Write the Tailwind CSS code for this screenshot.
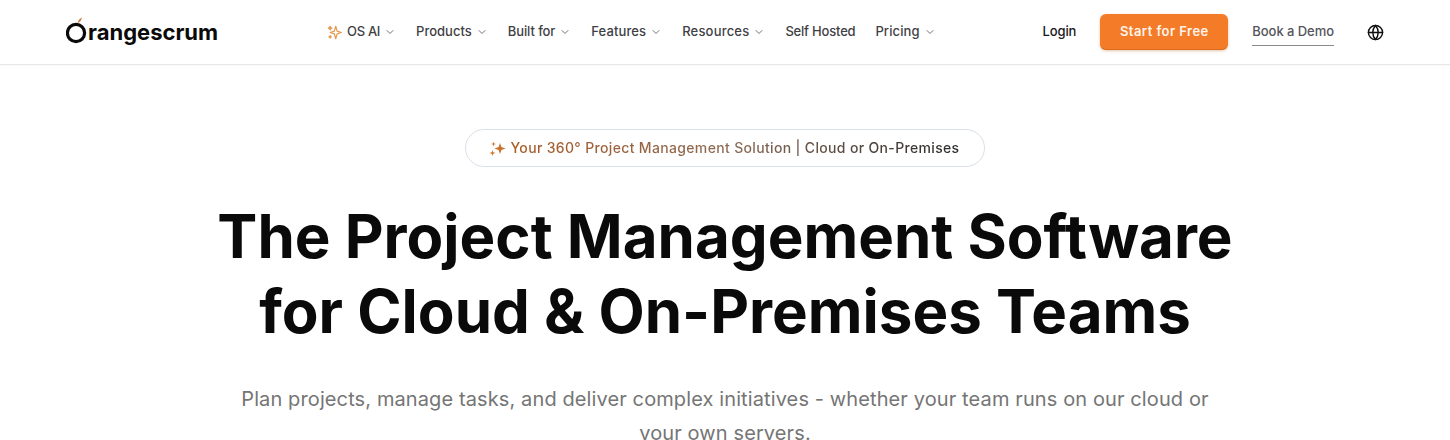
<!DOCTYPE html>
<html lang="en">
<head>
    <meta charset="UTF-8">
    <title>Orangescrum</title>
    <script src="https://cdn.jsdelivr.net/npm/@tailwindcss/browser@4"></script>
</head>
<body class="bg-white font-['Inter',sans-serif] h-[440px] overflow-hidden">
    <!-- Navbar -->
    <header class="h-[65px] border-b border-[#e8e8e8] shadow-[0_1px_2px_rgba(0,0,0,0.03)] flex items-center pl-[66px] pr-[66px]">
        <a class="flex items-center w-[252px] h-[32px] shrink-0 text-[#0a0a0a]">
            <svg class="w-[22px] h-[32px] shrink-0" viewBox="0 0 22 32" fill="none">
                <circle cx="10" cy="17" r="8.6" stroke="#0a0a0a" stroke-width="3.2"/>
                <path d="M11.5 7 C12 4.2 13.5 2.4 16 1.4 C15.6 4 14.2 6 11.5 7 Z" fill="#c9824e"/>
            </svg>
            <span class="text-[22px] leading-[30px] font-bold">rangescrum</span>
        </a>
        <nav class="flex items-center gap-[20px] text-[13px] font-medium text-[#3f3f46] ml-[9px]">
            <a class="flex items-center">
                <svg class="w-[15px] h-[15px] mr-[5px]" viewBox="0 0 24 24" fill="none" stroke="#e39a4f" stroke-width="1.9" stroke-linejoin="round">
                    <path d="M14 2 L16.2 9.8 L23 12 L16.2 14.2 L14 22 L11.8 14.2 L5 12 L11.8 9.8 Z"/>
                    <path d="M5 2 L5.8 4.2 L8 5 L5.8 5.8 L5 8 L4.2 5.8 L2 5 L4.2 4.2 Z"/>
                    <path d="M5 17 L5.6 18.4 L7 19 L5.6 19.6 L5 21 L4.4 19.6 L3 19 L4.4 18.4 Z"/>
                </svg>
                <span class="tracking-[-0.3px]">OS AI</span>
                <svg class="w-[12px] h-[12px] ml-[4px]" viewBox="0 0 24 24" fill="none" stroke="#71717a" stroke-width="2" stroke-linecap="round" stroke-linejoin="round"><path d="M6 9l6 6 6-6"/></svg>
            </a>
            <a class="flex items-center">Products
                <svg class="w-[12px] h-[12px] ml-[4px]" viewBox="0 0 24 24" fill="none" stroke="#71717a" stroke-width="2" stroke-linecap="round" stroke-linejoin="round"><path d="M6 9l6 6 6-6"/></svg>
            </a>
            <a class="flex items-center tracking-[-0.1px]">Built for
                <svg class="w-[12px] h-[12px] ml-[4px]" viewBox="0 0 24 24" fill="none" stroke="#71717a" stroke-width="2" stroke-linecap="round" stroke-linejoin="round"><path d="M6 9l6 6 6-6"/></svg>
            </a>
            <a class="flex items-center tracking-[0.1px]">Features
                <svg class="w-[12px] h-[12px] ml-[4px]" viewBox="0 0 24 24" fill="none" stroke="#71717a" stroke-width="2" stroke-linecap="round" stroke-linejoin="round"><path d="M6 9l6 6 6-6"/></svg>
            </a>
            <a class="flex items-center tracking-[0.2px]">Resources
                <svg class="w-[12px] h-[12px] ml-[4px]" viewBox="0 0 24 24" fill="none" stroke="#71717a" stroke-width="2" stroke-linecap="round" stroke-linejoin="round"><path d="M6 9l6 6 6-6"/></svg>
            </a>
            <a class="tracking-[-0.2px]">Self Hosted</a>
            <a class="flex items-center tracking-[0.1px]">Pricing
                <svg class="w-[12px] h-[12px] ml-[4px]" viewBox="0 0 24 24" fill="none" stroke="#71717a" stroke-width="2" stroke-linecap="round" stroke-linejoin="round"><path d="M6 9l6 6 6-6"/></svg>
            </a>
        </nav>
        <div class="ml-auto flex items-center">
            <a class="text-[13px] font-medium text-[#18181b] tracking-[-0.1px]">Login</a>
            <a class="ml-[24px] w-[128px] h-[36px] flex items-center justify-center rounded-[6px] bg-[#f47b28] border-b border-[#d96c1e] text-[#fff4ea] text-[13px] font-semibold tracking-[0.45px] shadow-[0_1px_3px_rgba(180,90,20,0.35)]">Start for Free</a>
            <a class="ml-[24px] h-[27px] flex items-center border-b border-[#8a8a8a] text-[13px] font-medium text-[#55555c] tracking-[-0.05px]">Book a Demo</a>
            <svg class="ml-[33px] w-[17px] h-[17px]" viewBox="0 0 24 24" fill="none" stroke="#0f0f10" stroke-width="2" stroke-linecap="round" stroke-linejoin="round">
                <circle cx="12" cy="12" r="10"/><path d="M2 12h20"/><path d="M12 2a15 15 0 0 1 0 20a15 15 0 0 1 0-20"/>
            </svg>
        </div>
    </header>

    <!-- Hero -->
    <main class="flex flex-col items-center pt-[64px]">
        <div class="w-[520px] h-[38px] rounded-full border border-[#dbe0e8] flex items-center justify-center text-[14px] font-medium tracking-[0.34px] ml-[-1px]">
            <svg class="w-[17px] h-[17px] mr-[4px] shrink-0" viewBox="0 0 17 17" fill="#c9722c">
                <path d="M11 3 L12.4 7.1 L16.5 8.5 L12.4 9.9 L11 14 L9.6 9.9 L5.5 8.5 L9.6 7.1 Z"/>
                <path d="M4.5 1.5 L5.1 3.4 L7 4 L5.1 4.6 L4.5 6.5 L3.9 4.6 L2 4 L3.9 3.4 Z"/>
                <path d="M3.5 10 L4.2 12.3 L6.5 13 L4.2 13.7 L3.5 16 L2.8 13.7 L0.5 13 L2.8 12.3 Z"/>
            </svg>
            <span class="bg-gradient-to-r from-[#a85a20] via-[#8a6a55] to-[#2b2b2b] bg-clip-text text-transparent whitespace-nowrap -mt-px">Your 360° Project Management Solution | Cloud or On-Premises</span>
        </div>
        <h1 class="mt-[32px] text-center text-[60px] leading-[75px] font-bold text-[#0a0a0a]">The Project Management Software<br>for Cloud &amp; On-Premises Teams</h1>
        <p class="mt-[33px] text-center text-[20px] leading-[34px] text-[#757575] tracking-[0.11px] w-[1000px]">Plan projects, manage tasks, and deliver complex initiatives - whether your team runs on our cloud or your own servers.</p>
    </main>
</body>
</html>
